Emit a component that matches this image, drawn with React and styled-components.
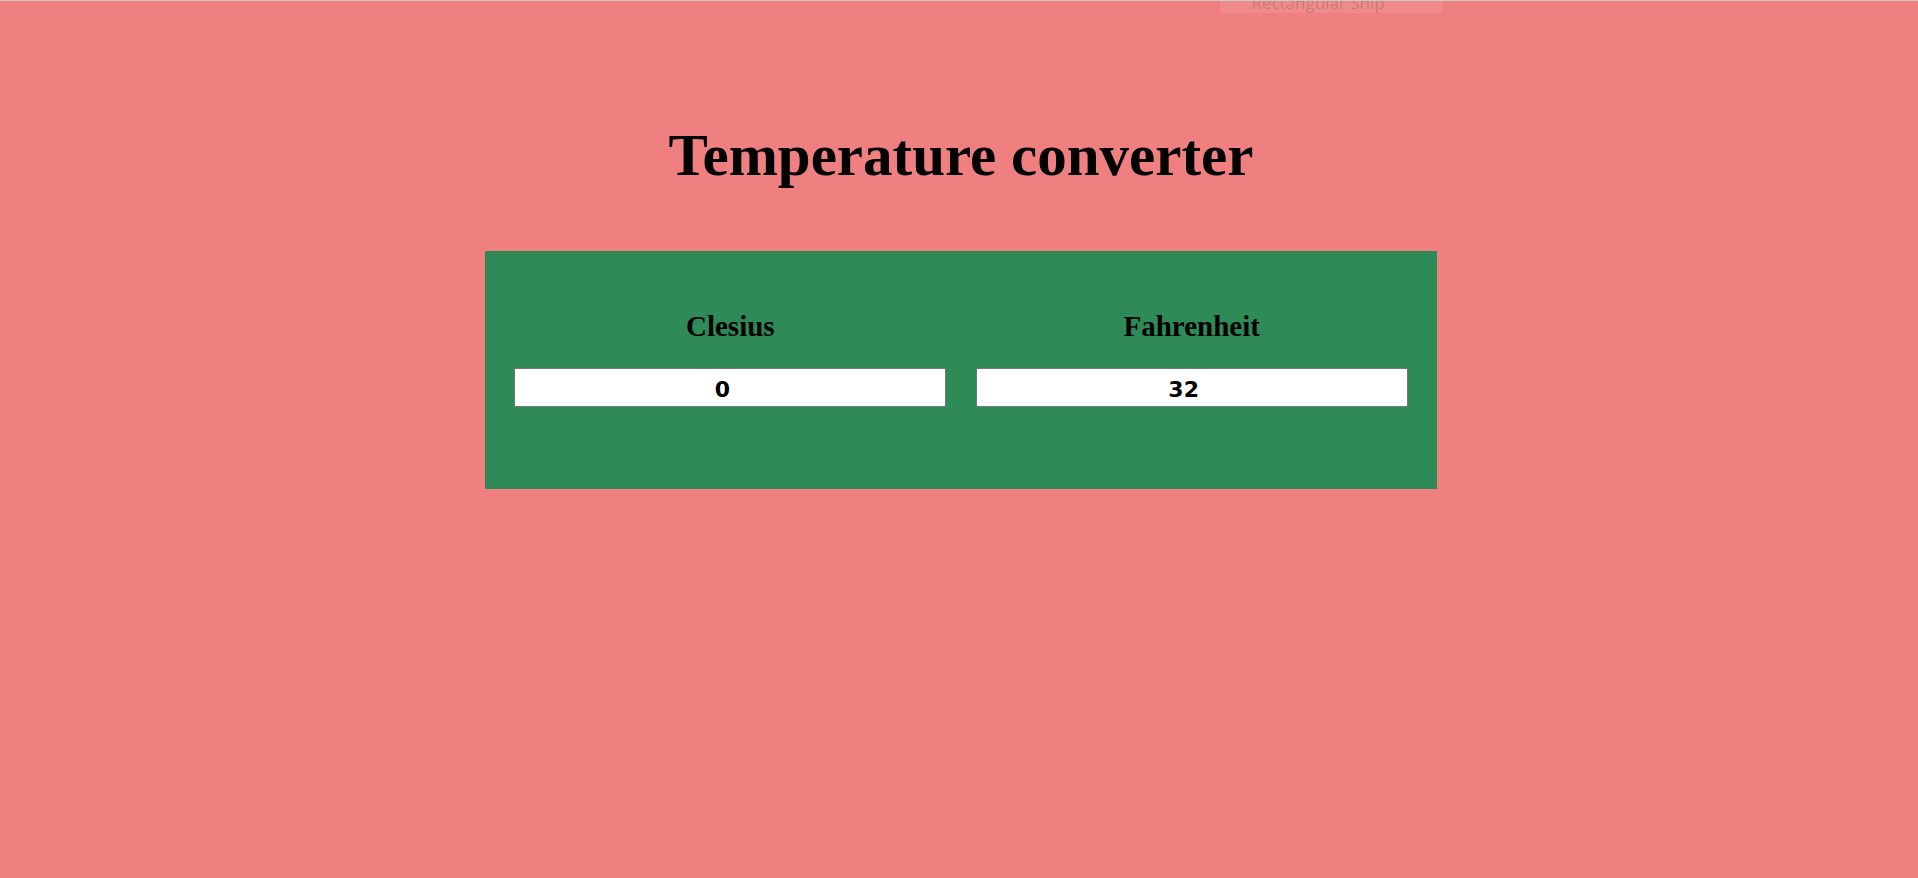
import styled, { createGlobalStyle } from 'styled-components';

const GlobalStyle = createGlobalStyle`
   html, body {
      margin: 0;
      padding: 0;
      background: #f08080;
   }
`;

const App = () => {
   return (
      <Page>
         <GlobalStyle />
         <SnipToast>
            <span>Rectangular Snip</span>
         </SnipToast>
         <Title>Temperature converter</Title>
         <Converter>
            <Field>
               <Label>Clesius</Label>
               <Input type="text" defaultValue="0" />
            </Field>
            <Field>
               <Label>Fahrenheit</Label>
               <Input type="text" defaultValue="32" />
            </Field>
         </Converter>
      </Page>
   );
};

const Page = styled.div`
   position: relative;
   min-height: 877px;
   border-top: 1px solid #c8c8c8;
   background: #f08080;
   display: flex;
   flex-direction: column;
   align-items: center;
   padding-top: 119px;
   box-sizing: border-box;
   overflow: hidden;
`;

const SnipToast = styled.div`
   position: absolute;
   top: 0;
   left: 1220px;
   width: 222px;
   height: 12px;
   background: rgba(255, 255, 255, 0.08);
   overflow: hidden;
   display: flex;
   justify-content: center;
   padding-right: 26px;
   box-sizing: border-box;
   span {
      margin-top: -8px;
      font-family: 'Open Sans', sans-serif;
      font-size: 17px;
      line-height: 20px;
      color: rgba(90, 90, 90, 0.3);
      white-space: nowrap;
   }
`;

const Title = styled.h1`
   margin: 0 0 0 4px;
   font-family: 'Liberation Serif', 'Times New Roman', serif;
   font-weight: bold;
   font-size: 59px;
   line-height: 70px;
   color: #000;
`;

const Converter = styled.div`
   margin: 61px 0 0 4px;
   width: 952px;
   height: 238px;
   box-sizing: border-box;
   background: #2e8b57;
   display: flex;
   justify-content: space-evenly;
   padding-top: 59px;
`;

const Field = styled.div`
   width: 432px;
   display: flex;
   flex-direction: column;
   align-items: center;
`;

const Label = styled.h2`
   margin: 0 0 26px;
   font-family: 'Liberation Serif', 'Times New Roman', serif;
   font-weight: bold;
   font-size: 29px;
   line-height: 32px;
   color: #000;
`;

const Input = styled.input`
   width: 100%;
   height: 39px;
   box-sizing: border-box;
   border: 1px solid #767676;
   background: #fff;
   padding: 4px 16px 0 0;
   outline: none;
   text-align: center;
   font-family: 'DejaVu Sans', Verdana, sans-serif;
   font-weight: bold;
   font-size: 22px;
   color: #000;
`;

export default App;
